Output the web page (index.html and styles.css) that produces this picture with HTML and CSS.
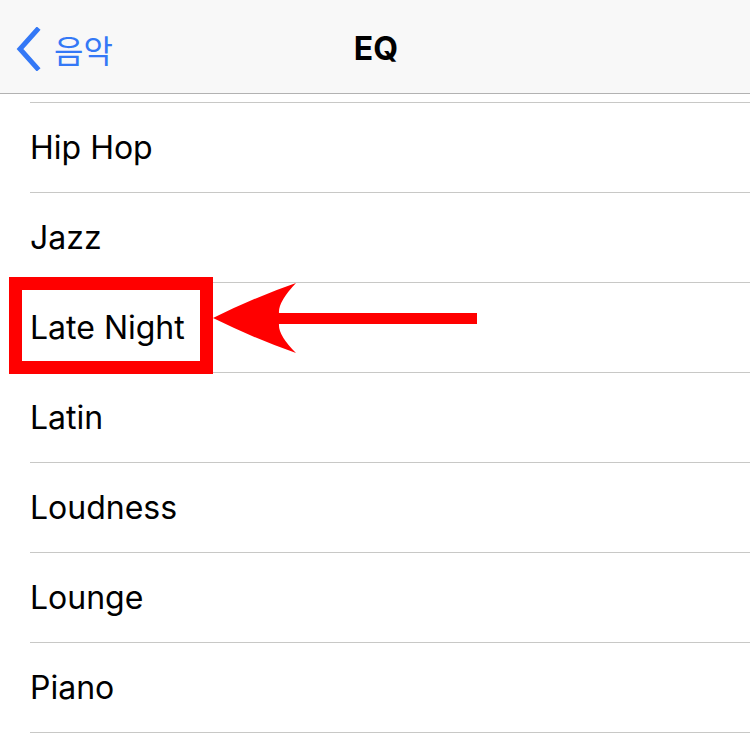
FILE: index.html
```html
<!DOCTYPE html>
<html lang="ko">
<head>
<meta charset="utf-8">
<link rel="stylesheet" href="styles.css">
</head>
<body>
<div class="screen">
  <header class="navbar">
    <div class="back">
      <svg class="chev" width="28" height="44" viewBox="0 0 28 44"><path d="M23 3 L6 22 L23 41" fill="none" stroke="#3478f6" stroke-width="5" stroke-linecap="square" stroke-linejoin="miter"/></svg>
      <span class="back-label">음악</span>
    </div>
    <div class="title">EQ</div>
  </header>
  <ul class="list">
    <li class="row spacer"></li>
    <li class="row">Hip Hop</li>
    <li class="row">Jazz</li>
    <li class="row">Late Night</li>
    <li class="row">Latin</li>
    <li class="row">Loudness</li>
    <li class="row">Lounge</li>
    <li class="row">Piano</li>
  </ul>
  <div class="highlight"></div>
  <svg class="arrow" width="750" height="745" viewBox="0 0 750 745">
    <path d="M213 318 Q258 296 296 283 Q278 302 279 313 L477 313 L477 324 L279 324 Q278 335 296 353 Q258 340 213 318 Z" fill="#ff0000"/>
  </svg>
</div>
</body>
</html>
```
FILE: styles.css
```css
html, body {
  margin: 0;
  padding: 0;
  background: #ffffff;
}
.screen {
  position: relative;
  width: 750px;
  height: 745px;
  overflow: hidden;
  font-family: "Inter", "Liberation Sans", "Noto Sans CJK KR", sans-serif;
}
.navbar {
  height: 93px;
  background: #f8f8f8;
  border-bottom: 1px solid #b2b2b2;
  display: flex;
  align-items: center;
  justify-content: center;
  position: relative;
}
.back {
  position: absolute;
  left: 14px;
  top: 27px;
  display: flex;
  align-items: center;
  gap: 12px;
}
.chev {
  display: block;
}
.back-label {
  font-family: "Noto Sans CJK KR", sans-serif;
  font-size: 32px;
  color: #3478f6;
  line-height: 44px;
}
.title {
  font-size: 32px;
  font-weight: 700;
  color: #000;
  padding-top: 4px;
  padding-left: 2px;
}
.list {
  list-style: none;
  margin: 0;
  padding: 0 0 0 30px;
}
.row {
  height: 89px;
  border-bottom: 1px solid #c8c8c6;
  display: flex;
  align-items: center;
  padding-left: 0;
  font-size: 32px;
  color: #000;
}
.row.spacer {
  height: 8px;
}
.highlight {
  position: absolute;
  left: 9px;
  top: 277px;
  width: 204px;
  height: 97px;
  box-sizing: border-box;
  border: 13px solid #ff0000;
}
.arrow {
  position: absolute;
  left: 0;
  top: 0;
}
```
